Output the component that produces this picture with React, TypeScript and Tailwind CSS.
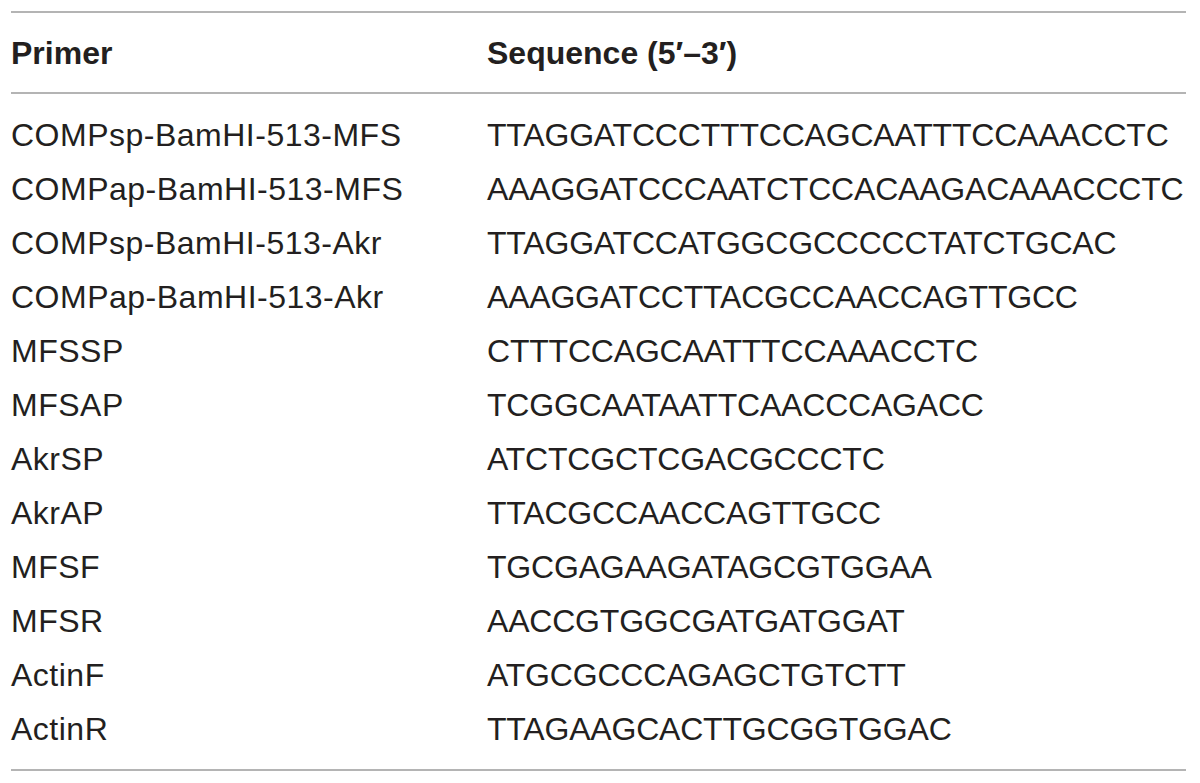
import React from 'react';

const rows: [string, string][] = [
  ['COMPsp-BamHI-513-MFS', 'TTAGGATCCCTTTCCAGCAATTTCCAAACCTC'],
  ['COMPap-BamHI-513-MFS', 'AAAGGATCCCAATCTCCACAAGACAAACCCTC'],
  ['COMPsp-BamHI-513-Akr', 'TTAGGATCCATGGCGCCCCCTATCTGCAC'],
  ['COMPap-BamHI-513-Akr', 'AAAGGATCCTTACGCCAACCAGTTGCC'],
  ['MFSSP', 'CTTTCCAGCAATTTCCAAACCTC'],
  ['MFSAP', 'TCGGCAATAATTCAACCCAGACC'],
  ['AkrSP', 'ATCTCGCTCGACGCCCTC'],
  ['AkrAP', 'TTACGCCAACCAGTTGCC'],
  ['MFSF', 'TGCGAGAAGATAGCGTGGAA'],
  ['MFSR', 'AACCGTGGCGATGATGGAT'],
  ['ActinF', 'ATGCGCCCAGAGCTGTCTT'],
  ['ActinR', 'TTAGAAGCACTTGCGGTGGAC'],
];

export default function App() {
  return (
    <div className="w-[1200px] h-[783px] bg-white pt-[11px] pl-[11px] text-[#231f20] font-['Liberation_Sans',Arial,sans-serif]">
      <div className="w-[1175px] border-t-2 border-b-2 border-[#b4b4b4]">
        {/* Header */}
        <div className="grid grid-cols-[476px_1fr] pt-[13px] pb-[12px] border-b-2 border-[#b4b4b4] text-[32px] leading-[54px] font-bold">
          <div>Primer</div>
          <div>Sequence (5′–3′)</div>
        </div>

        {/* Body */}
        <div className="pt-[14px] pb-[13px]">
          {rows.map(([name, seq]) => (
            <div key={name} className="grid grid-cols-[476px_1fr] text-[32px] leading-[54px]">
              <div className="tracking-[0.5px]">{name}</div>
              <div className="tracking-[-0.2px]">{seq}</div>
            </div>
          ))}
        </div>
      </div>
    </div>
  );
}
